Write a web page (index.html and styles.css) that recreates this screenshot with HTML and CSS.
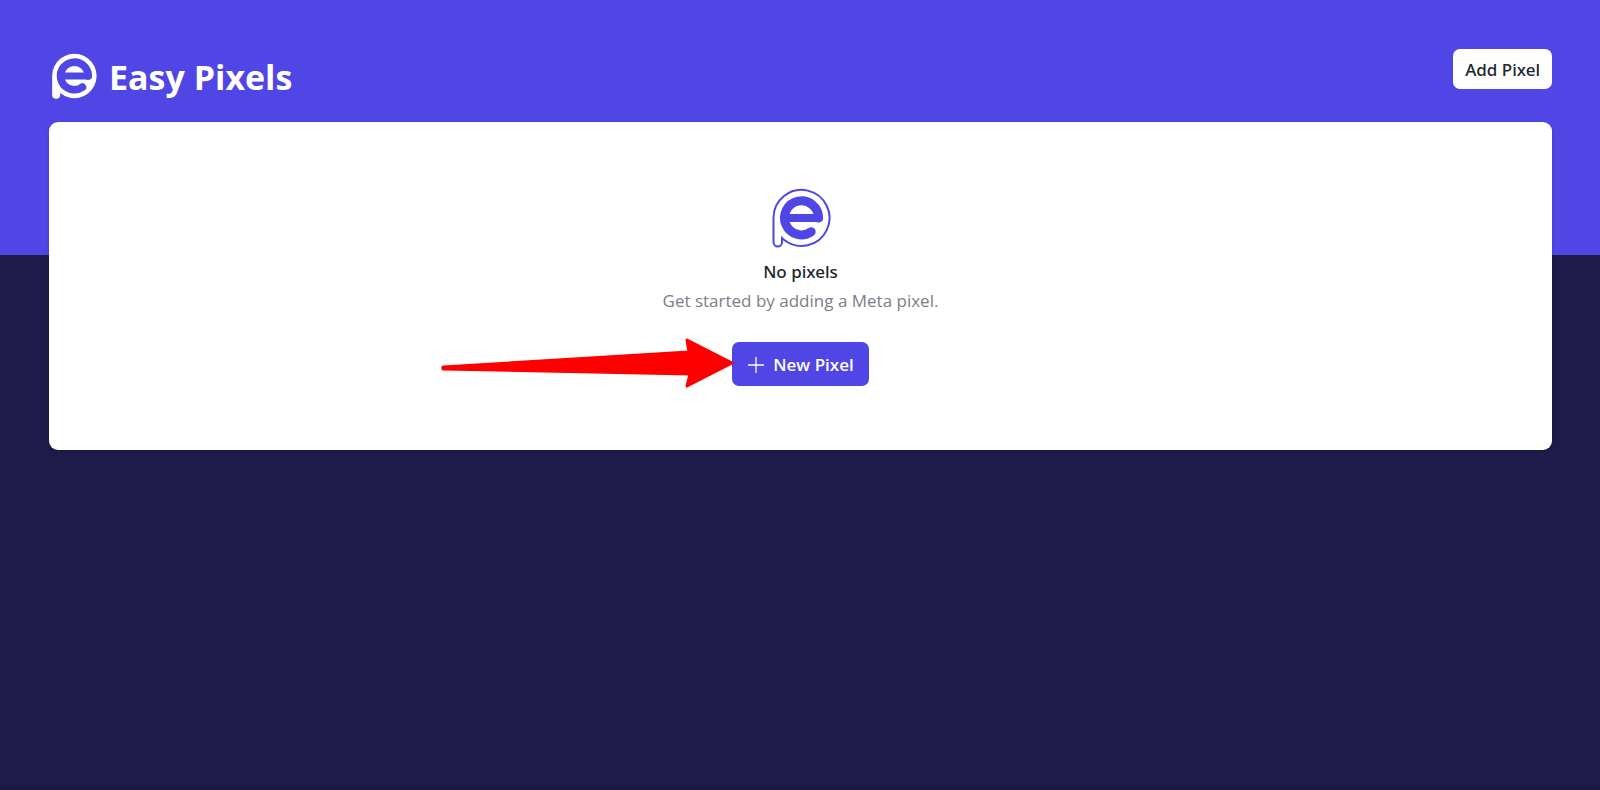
FILE: index.html
```html
<!DOCTYPE html>
<html lang="en">

<head>
    <meta charset="UTF-8">
    <meta name="viewport" content="width=device-width, initial-scale=1.0">
    <title>Easy Pixels</title>
    <link rel="stylesheet" href="styles.css">
</head>

<body>
    <div class="page">
        <header class="header">
            <div class="brand">
                <svg class="brand-logo" viewBox="0 0 60 60" aria-hidden="true">
                    <path class="logo-pin" d="M1.5 30A29 29 0 1 1 12 52.3V54.3A5.25 5.25 0 0 1 1.5 54.3Z"></path>
                    <path class="logo-letter" d="M41 44.5A18 18 0 1 1 48.5 30"></path>
                    <path class="logo-bar" d="M49 30H14"></path>
                </svg>
                <h1>Easy Pixels</h1>
            </div>
            <button type="button" class="btn btn-light">Add Pixel</button>
        </header>

        <main class="card">
            <svg class="empty-logo" viewBox="0 0 60 60" aria-hidden="true">
                <path class="logo-outline" d="M2.5 30A28 28 0 1 1 13 51.8L11 50V54.3A4.25 4.25 0 0 1 2.5 54.3Z"></path>
                <path class="logo-letter" d="M40.2 43.8A17 17 0 1 1 47.5 30"></path>
                <path class="logo-bar" d="M48 30H14"></path>
            </svg>
            <h2>No pixels</h2>
            <p>Get started by adding a Meta pixel.</p>
            <div class="action">
                <button type="button" class="btn btn-primary">
                    <svg class="plus" viewBox="0 0 18 18" aria-hidden="true">
                        <path d="M9 1V17M1 9H17"></path>
                    </svg>
                    New Pixel
                </button>
                <!-- Arrow pointing at the button -->
                <svg class="arrow" viewBox="0 0 296 52" aria-hidden="true">
                    <path d="M4 30L250 15L248 3L293 26L248 49L251 37L4 32Z"></path>
                </svg>
            </div>
        </main>
    </div>
</body>

</html>
```
FILE: styles.css
```css
* {
    box-sizing: border-box;
}

body {
    margin: 0;
    min-height: 100vh;
    font-family: 'Open Sans', 'Noto Sans', sans-serif;
    font-size: 17px;
    line-height: 24px;
    color: #212529;
    background: linear-gradient(#4f46e5 255px, #1e1b4b 255px);
    border-bottom: 2px solid #1b1642;
}

h1,
h2,
p {
    margin: 0;
}

.page {
    padding: 49px 48px 48px 49px;
}

.header {
    display: flex;
    justify-content: space-between;
    align-items: flex-start;
    margin-bottom: 20px;
}

.brand {
    display: flex;
    align-items: center;
    gap: 12px;
    padding: 3px 2px 2px;
}

.brand-logo {
    width: 46px;
    height: 46px;
}

.brand-logo .logo-pin {
    fill: #ffffff;
}

.brand-logo .logo-letter {
    stroke-width: 10;
}

.brand-logo .logo-bar {
    stroke-width: 9;
}

h1 {
    padding-top: 2px;
    font-size: 34px;
    line-height: 46px;
    font-weight: 700;
    color: #ffffff;
}

.logo-letter,
.logo-bar {
    fill: none;
    stroke: #4f46e5;
    stroke-linecap: round;
}

.logo-letter {
    stroke-width: 9;
}

.logo-bar {
    stroke-width: 8;
}

.logo-outline {
    fill: none;
    stroke: #4f46e5;
    stroke-width: 2;
}

.btn {
    display: inline-flex;
    align-items: center;
    font-family: inherit;
    font-size: 17px;
    line-height: 24px;
    border: 0;
    border-radius: 7px;
    cursor: pointer;
}

.btn-light {
    padding: 9px 12px 7px;
    font-family: 'Noto Sans', sans-serif;
    font-weight: 500;
    color: #212529;
    background-color: #ffffff;
}

.btn-primary {
    gap: 8px;
    padding: 11px 15px 9px;
    font-weight: 600;
    color: #ffffff;
    background-color: #4f46e5;
}

.plus {
    width: 18px;
    height: 18px;
    fill: none;
    stroke: #ffffff;
    stroke-width: 1.3;
}

.card {
    display: flex;
    flex-direction: column;
    align-items: center;
    padding: 66px 24px 64px;
    background-color: #ffffff;
    border-radius: 9px;
    box-shadow: 0 1px 3px rgba(0, 0, 0, 0.2);
}

.empty-logo {
    width: 60px;
    height: 60px;
    margin-bottom: 12px;
}

h2 {
    font-family: 'Noto Sans', sans-serif;
    font-size: 17px;
    line-height: 24px;
    font-weight: 500;
}

.card p {
    margin: 5px 0 29px;
    color: #7b8086;
}

.action {
    position: relative;
    display: flex;
}

.arrow {
    position: absolute;
    top: -5px;
    right: calc(100% - 3px);
    width: 296px;
    height: 52px;
    fill: #ff0000;
    stroke: #ff0000;
    stroke-width: 3;
    stroke-linejoin: round;
}
```
